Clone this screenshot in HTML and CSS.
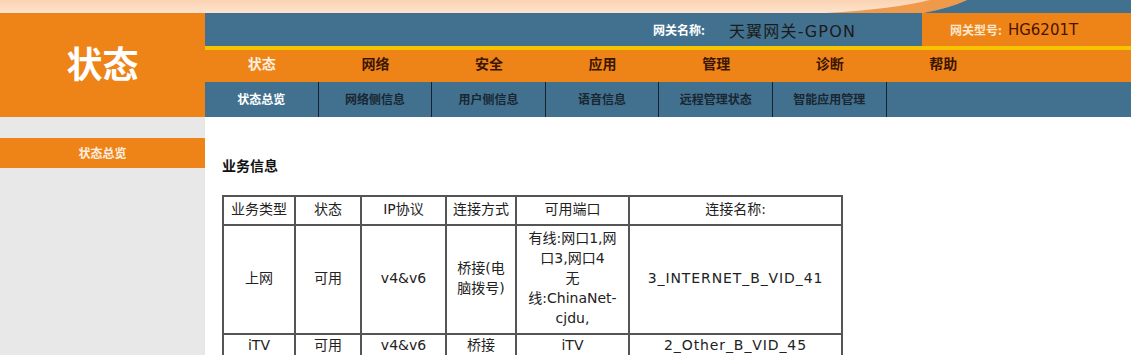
FILE: index.html
```html
<!DOCTYPE html>
<html lang="zh-CN">
<head>
    <meta charset="UTF-8">
    <title>状态</title>
    <link rel="stylesheet" href="styles.css">
</head>
<body>
    <!-- 顶部装饰条 -->
    <div class="banner">
        <svg width="100%" height="13" viewBox="0 0 1131 13" preserveAspectRatio="none">
            <defs>
                <linearGradient id="peach" x1="0" y1="0" x2="0" y2="1">
                    <stop offset="0" stop-color="#fbd3b2"/>
                    <stop offset="1" stop-color="#fde3cd"/>
                </linearGradient>
            </defs>
            <rect x="0" y="0" width="1131" height="13" fill="url(#peach)"/>
            <path d="M826,13 Q895,9 930,0 L967,0 Q950,8 923,13 Z" fill="#ef9a48"/>
            <path d="M923,13 Q950,8 967,0 L1131,0 L1131,13 Z" fill="#41718f"/>
        </svg>
    </div>

    <div class="header">
        <div class="logo">状态</div>
        <div class="head-right">
            <div class="info-bar">
                <div class="info-name">
                    <span class="info-label">网关名称:</span>
                    <span class="info-value">天翼网关-GPON</span>
                </div>
                <div class="info-model">
                    <span class="info-label">网关型号:</span>
                    <span class="model-value">HG6201T</span>
                </div>
            </div>
            <div class="menu">
                <a class="menu-item active">状态</a>
                <a class="menu-item">网络</a>
                <a class="menu-item">安全</a>
                <a class="menu-item">应用</a>
                <a class="menu-item">管理</a>
                <a class="menu-item">诊断</a>
                <a class="menu-item">帮助</a>
            </div>
            <div class="submenu">
                <a class="sub-item active">状态总览</a>
                <a class="sub-item">网络侧信息</a>
                <a class="sub-item">用户侧信息</a>
                <a class="sub-item">语音信息</a>
                <a class="sub-item">远程管理状态</a>
                <a class="sub-item">智能应用管理</a>
            </div>
        </div>
    </div>

    <div class="page">
        <div class="sidebar">
            <div class="side-item">状态总览</div>
        </div>
        <div class="content">
            <div class="section-title">业务信息</div>
            <table class="info-table">
                <tr>
                    <th class="c1">业务类型</th>
                    <th class="c2">状态</th>
                    <th class="c3">IP协议</th>
                    <th class="c4">连接方式</th>
                    <th class="c5">可用端口</th>
                    <th class="c6">连接名称:</th>
                </tr>
                <tr class="tall">
                    <td>上网</td>
                    <td>可用</td>
                    <td>v4&amp;v6</td>
                    <td>桥接(电脑拨号)</td>
                    <td>有线:网口1,网口3,网口4<br>无线:ChinaNet-cjdu,</td>
                    <td class="conn-name">3_INTERNET_B_VID_41</td>
                </tr>
                <tr>
                    <td>iTV</td>
                    <td>可用</td>
                    <td>v4&amp;v6</td>
                    <td>桥接</td>
                    <td>iTV</td>
                    <td class="conn-name">2_Other_B_VID_45</td>
                </tr>
            </table>
        </div>
    </div>
</body>
</html>
```

FILE: styles.css
```css
* {
    margin: 0;
    padding: 0;
    box-sizing: border-box;
}

body {
    font-family: "Noto Sans CJK SC", sans-serif;
    background: #fff;
    width: 1131px;
    height: 355px;
    overflow: hidden;
}

.banner {
    height: 13px;
    line-height: 0;
}

.header {
    display: grid;
    grid-template-columns: 205px 1fr;
    height: 104px;
}

.logo {
    background: #ee8418;
    color: #fff;
    font-size: 36px;
    font-weight: bold;
    display: flex;
    align-items: center;
    justify-content: center;
    padding-bottom: 6px;
}

.head-right {
    display: flex;
    flex-direction: column;
}

.info-bar {
    display: flex;
    border-bottom: 4px solid #f6c300;
    height: 37px;
}

.info-name {
    flex: 1;
    background: #41718f;
    display: flex;
    align-items: center;
    padding-left: 448px;
}

.info-model {
    width: 209px;
    background: #ee8418;
    display: flex;
    align-items: center;
    padding-left: 28px;
}

.info-label {
    color: #fff;
    font-size: 12px;
    font-weight: bold;
    margin-right: 24px;
}

.info-model .info-label {
    color: #fbe6d0;
    margin-right: 6px;
}

.info-value {
    color: #1b1b1b;
    font-size: 16px;
    font-family: "DejaVu Sans", "Noto Sans CJK SC", sans-serif;
    letter-spacing: 1.2px;
}

.model-value {
    color: #4a1300;
    font-size: 15px;
    font-family: "DejaVu Sans", sans-serif;
}

.menu {
    display: flex;
    height: 32px;
    background: #ee8418;
}

.menu-item {
    width: 113.6px;
    display: flex;
    align-items: center;
    justify-content: center;
    font-size: 14px;
    font-weight: bold;
    color: #3b1500;
    padding-bottom: 6px;
}

.menu-item.active {
    color: #fdf0e0;
}

.submenu {
    display: flex;
    height: 35px;
    background: #41718f;
}

.sub-item {
    width: 113.6px;
    display: flex;
    align-items: center;
    justify-content: center;
    font-size: 12px;
    font-weight: bold;
    color: #1a2630;
    border-right: 1px solid #15232e;
    padding-bottom: 2px;
}

.sub-item.active {
    color: #fff;
}

.page {
    display: grid;
    grid-template-columns: 205px 1fr;
    height: 238px;
}

.sidebar {
    background: #e8e8e8;
    padding-top: 21px;
}

.side-item {
    height: 30px;
    background: #ee8418;
    color: #fdeee0;
    font-size: 12px;
    font-weight: bold;
    display: flex;
    align-items: center;
    justify-content: center;
    padding-bottom: 2px;
}

.content {
    padding: 38px 0 0 17px;
}

.section-title {
    font-size: 14px;
    font-weight: bold;
    color: #111;
    height: 40px;
}

.info-table {
    border-collapse: collapse;
    border: 2px solid #555;
    font-family: "DejaVu Sans", "Noto Sans CJK SC", sans-serif;
    font-size: 14px;
    color: #222;
    table-layout: fixed;
    width: 619px;
}

.info-table th,
.info-table td {
    border: 2px solid #555;
    text-align: center;
    font-weight: normal;
    line-height: 20px;
    padding: 0 6px 3px;
}

.info-table th {
    height: 29px;
}

.info-table .tall td {
    height: 109px;
}

.info-table .conn-name {
    letter-spacing: 0.9px;
}

.c1 { width: 72px; }
.c2 { width: 66px; }
.c3 { width: 85px; }
.c4 { width: 70px; }
.c5 { width: 113px; }
.c6 { width: 213px; }
```
